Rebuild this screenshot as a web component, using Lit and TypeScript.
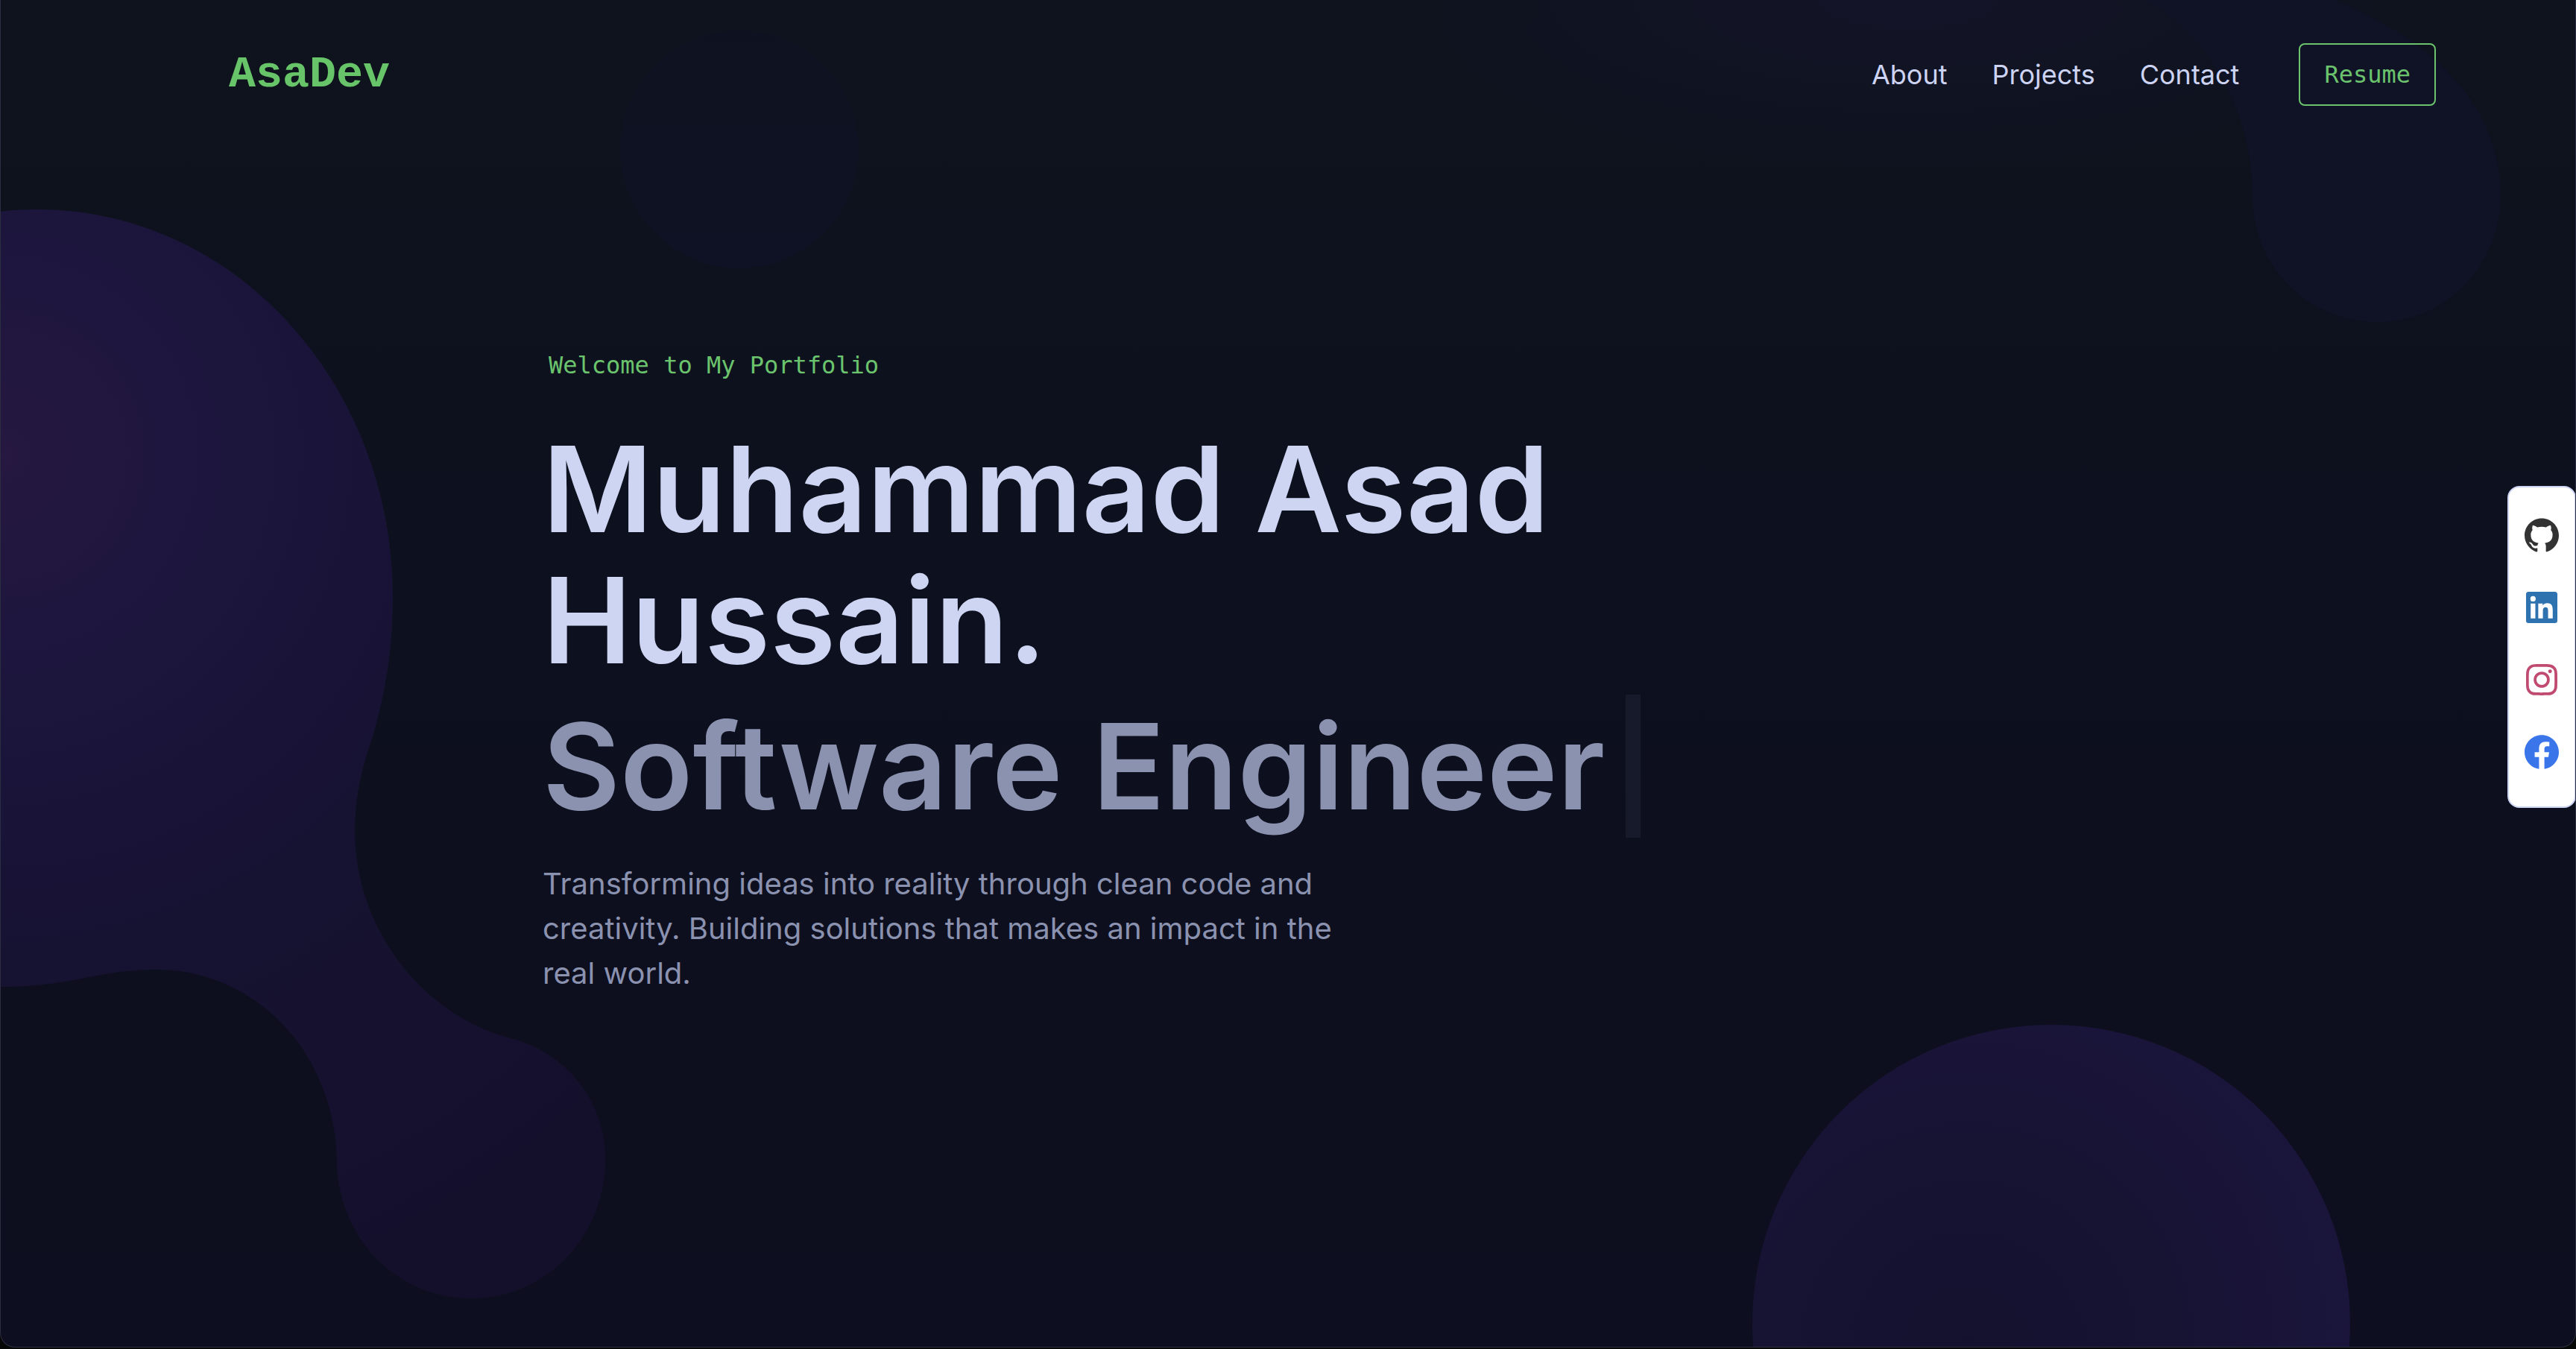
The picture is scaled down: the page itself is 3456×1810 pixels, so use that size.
import { LitElement, html, css, svg } from "lit";
import { customElement } from "lit/decorators.js";

@customElement("backdrop-art")
class BackdropArt extends LitElement {
  static styles = css`
    :host { display: block; }
    .art { display: block; width: 100%; height: 100%; }
  `;
  render() {
    return html`<svg class="art" viewBox="0 0 3456 1810" preserveAspectRatio="none" aria-hidden="true">
      <defs>
        <radialGradient id="blob" gradientUnits="userSpaceOnUse" cx="0" cy="610" r="1180">
          <stop offset="0" stop-color="#261840" />
          <stop offset="0.2" stop-color="#1e163e" />
          <stop offset="0.36" stop-color="#1a143a" />
          <stop offset="0.6" stop-color="#161231" />
          <stop offset="1" stop-color="#14102c" />
        </radialGradient>
        <radialGradient id="dome" gradientUnits="userSpaceOnUse" cx="2640" cy="1810" r="560">
          <stop offset="0" stop-color="#14112f" />
          <stop offset="0.5" stop-color="#171333" />
          <stop offset="1" stop-color="#1b153d" />
        </radialGradient>
        <radialGradient id="haze">
          <stop offset="0" stop-color="#131428" />
          <stop offset="1" stop-color="#131428" stop-opacity="0" />
        </radialGradient>
        <linearGradient id="drop" x1="0" y1="0" x2="0" y2="1">
          <stop offset="0" stop-color="#0e1220" />
          <stop offset="1" stop-color="#0e1224" />
        </linearGradient>
      </defs>
      <ellipse cx="2560" cy="0" rx="720" ry="230" fill="url(#haze)" />
      <circle cx="992" cy="200" r="160" fill="url(#drop)" />
      <path fill="#101326" d="M2880 0H3130C3260 50 3355 140 3355 262C3355 356 3282 432 3190 432C3096 432 3022 358 3022 262C3022 160 2970 50 2880 0Z" />
      <path fill="url(#blob)" d="M0 284C16 282 32 281 50 281C314 281 527 514 527 802C527 870 517 930 500 988C484 1034 476 1072 476 1115C476 1240 560 1356 677 1391C756 1408 812 1474 812 1555C812 1660 732 1742 632 1742C532 1742 456 1662 452 1563C452 1412 342 1301 210 1301C128 1301 100 1324 0 1324Z" />
      <circle cx="2752" cy="1776" r="401" fill="url(#dome)" />
    </svg>`;
  }
}

interface Social { name: string; color: string; size: string; path: string; }

const socials: Social[] = [
  { name: "GitHub", color: "#333333", size: "large", path: "M12 .297c-6.63 0-12 5.373-12 12 0 5.303 3.438 9.8 8.205 11.385.6.113.82-.258.82-.577 0-.285-.01-1.04-.015-2.04-3.338.724-4.042-1.61-4.042-1.61C4.422 18.07 3.633 17.7 3.633 17.7c-1.087-.744.084-.729.084-.729 1.205.084 1.838 1.236 1.838 1.236 1.07 1.835 2.809 1.305 3.495.998.108-.776.417-1.305.76-1.605-2.665-.3-5.466-1.332-5.466-5.93 0-1.31.465-2.38 1.235-3.22-.135-.303-.54-1.523.105-3.176 0 0 1.005-.322 3.3 1.23.96-.267 1.98-.399 3-.405 1.02.006 2.04.138 3 .405 2.28-1.552 3.285-1.23 3.285-1.23.645 1.653.24 2.873.12 3.176.765.84 1.23 1.91 1.23 3.22 0 4.61-2.805 5.625-5.475 5.92.42.36.81 1.096.81 2.22 0 1.606-.015 2.896-.015 3.286 0 .315.21.69.825.57C20.565 22.092 24 17.592 24 12.297c0-6.627-5.373-12-12-12" },
  { name: "LinkedIn", color: "#2f72b0", size: "small", path: "M20.447 20.452h-3.554v-5.569c0-1.328-.027-3.037-1.852-3.037-1.853 0-2.136 1.445-2.136 2.939v5.667H9.351V9h3.414v1.561h.046c.477-.9 1.637-1.85 3.37-1.85 3.601 0 4.267 2.37 4.267 5.455v6.286zM5.337 7.433a2.062 2.062 0 01-2.063-2.065 2.064 2.064 0 112.063 2.065zm1.782 13.019H3.555V9h3.564v11.452zM22.225 0H1.771C.792 0 0 .774 0 1.729v20.542C0 23.227.792 24 1.771 24h20.451C23.2 24 24 23.227 24 22.271V1.729C24 .774 23.2 0 22.222 0h.003z" },
  { name: "Instagram", color: "#c04a70", size: "small", path: "M12 0C8.74 0 8.333.015 7.053.072 5.775.132 4.905.333 4.14.63c-.789.306-1.459.717-2.126 1.384S.935 3.35.63 4.14C.333 4.905.131 5.775.072 7.053.012 8.333 0 8.74 0 12s.015 3.667.072 4.947c.06 1.277.261 2.148.558 2.913.306.788.717 1.459 1.384 2.126.667.666 1.336 1.079 2.126 1.384.766.296 1.636.499 2.913.558C8.333 23.988 8.74 24 12 24s3.667-.015 4.947-.072c1.277-.06 2.148-.262 2.913-.558.788-.306 1.459-.718 2.126-1.384.666-.667 1.079-1.335 1.384-2.126.296-.765.499-1.636.558-2.913.06-1.28.072-1.687.072-4.947s-.015-3.667-.072-4.947c-.06-1.277-.262-2.149-.558-2.913-.306-.789-.718-1.459-1.384-2.126C21.319 1.347 20.651.935 19.86.63c-.765-.297-1.636-.499-2.913-.558C15.667.012 15.26 0 12 0zm0 2.16c3.203 0 3.585.016 4.85.071 1.17.055 1.805.249 2.227.415.562.217.96.477 1.382.896.419.42.679.819.896 1.381.164.422.36 1.057.413 2.227.057 1.266.07 1.646.07 4.85s-.015 3.585-.074 4.85c-.061 1.17-.256 1.805-.421 2.227-.224.562-.479.96-.899 1.382-.419.419-.824.679-1.38.896-.42.164-1.065.36-2.235.413-1.274.057-1.649.07-4.859.07-3.211 0-3.586-.015-4.859-.074-1.171-.061-1.816-.256-2.236-.421-.569-.224-.96-.479-1.379-.899-.421-.419-.69-.824-.9-1.38-.165-.42-.359-1.065-.42-2.235-.045-1.26-.061-1.649-.061-4.844 0-3.196.016-3.586.061-4.861.061-1.17.255-1.814.42-2.234.21-.57.479-.96.9-1.381.419-.419.81-.689 1.379-.898.42-.166 1.051-.361 2.221-.421 1.275-.045 1.65-.06 4.859-.06l.045.03zm0 3.678a6.162 6.162 0 100 12.324 6.162 6.162 0 100-12.324zM12 16c-2.21 0-4-1.79-4-4s1.79-4 4-4 4 1.79 4 4-1.79 4-4 4zm7.846-10.405a1.441 1.441 0 01-2.88 0 1.44 1.44 0 012.88 0z" },
  { name: "Facebook", color: "#3a76ea", size: "large", path: "M24 12.073c0-6.627-5.373-12-12-12s-12 5.373-12 12c0 5.99 4.388 10.954 10.125 11.854v-8.385H7.078v-3.47h3.047V9.43c0-3.007 1.792-4.669 4.533-4.669 1.312 0 2.686.235 2.686.235v2.953H15.83c-1.491 0-1.956.925-1.956 1.874v2.25h3.328l-.532 3.47h-2.796v8.385C19.612 23.027 24 18.062 24 12.073z" },
];

@customElement("social-rail")
class SocialRail extends LitElement {
  static styles = css`
    :host { display: block; }
    .rail { box-sizing: border-box; width: 92px; padding: 15px 0 25px; display: flex; flex-direction: column; background: #fff; border: 2px solid #ccd3f3; border-radius: 16px; }
    .link { height: 97px; display: flex; align-items: center; justify-content: center; }
    .icon { display: block; }
    .large { width: 46px; height: 46px; }
    .small { width: 42px; height: 42px; }
  `;
  render() {
    return html`<nav class="rail" aria-label="Social links">
      ${socials.map((s) => html`<a class="link" href="#" aria-label=${s.name}>
        <svg class="icon ${s.size}" viewBox="0 0 24 24" fill=${s.color} aria-hidden="true">${svg`<path d=${s.path}></path>`}</svg>
      </a>`)}
    </nav>`;
  }
}

@customElement("app-root")
class AppRoot extends LitElement {
  static styles = css`
    :host { display: block; min-height: 100vh; background: #060807; font-family: Inter, "Liberation Sans", sans-serif; }
    .page { position: relative; box-sizing: border-box; min-height: calc(100vh - 2px); overflow: hidden; border: 1px solid #2c2f42; border-top: 0; border-radius: 0 0 20px 20px; background: linear-gradient(#0e131d, #0d101e 45%, #0d0e1f); }
    .backdrop { position: absolute; inset: 0 -1px -3px; }
    .header { position: relative; display: flex; align-items: center; justify-content: space-between; height: 200px; padding: 0 187px 0 306px; }
    .logo { font: 700 60px/1 Courier, "Nimbus Mono PS", "Courier New", "Liberation Mono", monospace; color: #68c468; text-decoration: none; }
    .menu { display: flex; align-items: center; gap: 60px; }
    .item { font-size: 36px; line-height: 44px; color: #ccd3f3; text-decoration: none; }
    .resume { box-sizing: border-box; margin-left: 20px; height: 84px; padding: 0 32px; border: 2px solid #6bc46d; border-radius: 8px; background: transparent; color: #6bc46d; font: 32px/1 "DejaVu Sans Mono", monospace; }
    .hero { position: relative; padding: 270px 0 0 727px; }
    .welcome { margin: 0 0 58px 8px; font: 32px/40px "DejaVu Sans Mono", monospace; color: #6bc46d; }
    .name { margin: 0; max-width: 1500px; font-size: 160px; line-height: 176px; font-weight: 600; color: #ced5f3; }
    .role { margin: 12px 0 0; display: flex; align-items: center; gap: 28px; font-size: 160px; line-height: 192px; font-weight: 600; font-variant-ligatures: none; color: #8b92b0; }
    .cursor { width: 20px; height: 192px; background: #171a2a; }
    .about { margin: 32px 0 0; max-width: 1090px; font-size: 40px; line-height: 60px; color: #8b92b0; }
    .social { position: absolute; right: -1px; top: 652px; }
  `;
  render() {
    return html`<div class="page">
      <backdrop-art class="backdrop"></backdrop-art>
      <header class="header">
        <a class="logo" href="#">AsaDev</a>
        <nav class="menu" aria-label="Main">
          <a class="item" href="#about">About</a>
          <a class="item" href="#projects">Projects</a>
          <a class="item" href="#contact">Contact</a>
          <button class="resume" type="button">Resume</button>
        </nav>
      </header>
      <main class="hero">
        <p class="welcome">Welcome to My Portfolio</p>
        <h1 class="name">Muhammad Asad Hussain.</h1>
        <h2 class="role"><span>Software Engineer</span><span class="cursor"></span></h2>
        <p class="about">Transforming ideas into reality through clean code and creativity. Building solutions that makes an impact in the real world.</p>
      </main>
      <social-rail class="social"></social-rail>
    </div>`;
  }
}
